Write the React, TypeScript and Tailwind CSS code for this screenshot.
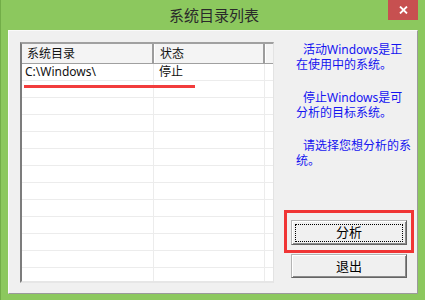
const FONT = "font-['Noto_Sans','Noto_Sans_CJK_SC',sans-serif]";

function ClassicButton({ label, focused }: { label: string; focused?: boolean }) {
  return (
    <div className="relative flex h-full w-full items-center justify-center border border-t-[#b4b4b4] border-l-[#b4b4b4] border-r-[#646464] border-b-[#646464] bg-[#f0f0f0] shadow-[inset_1px_1px_0_#ffffff,inset_-1px_-1px_0_#8a8a8a]">
      {focused ? <div className="absolute left-[3px] right-[3px] top-[3px] bottom-[2px] border border-dotted border-black" /> : null}
      <span className="text-[13px] leading-none text-black">{label}</span>
    </div>
  );
}

const rows = Array.from({ length: 14 }, (_, i) => i);

export default function App() {
  return (
    <div className={`flex h-[300px] w-[425px] flex-col overflow-hidden border-l border-[#72ad48] bg-[#8cc85e] ${FONT}`}>
      <div className="relative flex h-[30px] shrink-0 items-center justify-center">
        <span className="pl-[2px] text-[15px] leading-none text-[#2a2a2a]">系统目录列表</span>
        <div className="absolute right-[7px] top-0 flex h-[20px] w-[30px] items-center justify-center bg-[#c75050]">
          <svg width="9" height="8" viewBox="0 0 9 8">
            <path d="M1 0.5 L8 7.5 M8 0.5 L1 7.5" stroke="#ffffff" strokeWidth="1.8" fill="none" />
          </svg>
        </div>
      </div>

      <div className="ml-[7px] flex h-[264px] w-[410px] border border-t-[#fafafa] border-l-[#fafafa] border-r-[#9a9a9a] border-b-[#9a9a9a] bg-[#f0f0f0] pl-[11px] pt-[11px]">
        {/* list view */}
        <div className="relative h-[241px] w-[254px] shrink-0 overflow-hidden border-l-2 border-t-2 border-r border-b-2 border-l-[#7c7c7c] border-t-[#a0a0a0] border-r-[#e3e3e3] border-b-[#e6e6e6] bg-white">
          <div className="flex h-[20px] border-b border-[#a0a0a0] bg-[#f4f4f4] text-[12px] text-[#111]">
            <div className="flex w-[132px] items-center border-r-2 border-r-[#9c9c9c] pl-[5px]">系统目录</div>
            <div className="flex w-[111px] items-center border-l border-l-white border-r-2 border-r-[#9c9c9c] pl-[5px]">状态</div>
            <div className="flex-1 border-l border-l-white" />
          </div>
          {rows.map((i) => (
            <div key={i} className="flex h-[17px] border-b border-[#ececec] text-[12px] leading-none text-[#111]">
              <div className="flex w-[132px] items-center border-r border-[#ececec] pl-[3px]">{i === 0 ? "C:\\Windows\\" : ""}</div>
              <div className="flex w-[111px] items-center border-r border-[#ececec] pl-[5px]">{i === 0 ? "停止" : ""}</div>
              <div className="flex-1" />
            </div>
          ))}
          <div className="absolute left-[2px] top-[41px] h-[3px] w-[171px] bg-[#f23c3c]" />
        </div>

        {/* right panel */}
        <div className="ml-[10px] flex w-[130px] flex-col">
          <div className="pl-[12px] text-[12px] leading-[15px] text-[#1414f0]">
            <p>
              <span className="pl-[7px]">活动Windows是正</span>
              <br />
              在使用中的系统。
            </p>
            <p className="mt-[18px]">
              <span className="pl-[7px]">停止Windows是可</span>
              <br />
              分析的目标系统。
            </p>
            <p className="mt-[18px]">
              <span className="pl-[7px]">请选择您想分析的系</span>
              <br />
              统。
            </p>
          </div>
          <div className="mt-[42px] h-[43px] w-[130px] border-[3px] border-[#f03535] pl-[4px] pt-[7px]">
            <div className="h-[25px] w-[116px]">
              <ClassicButton label="分析" focused />
            </div>
          </div>
          <div className="ml-[7px] mt-[1px] h-[24px] w-[116px]">
            <ClassicButton label="退出" />
          </div>
        </div>
      </div>
    </div>
  );
}
